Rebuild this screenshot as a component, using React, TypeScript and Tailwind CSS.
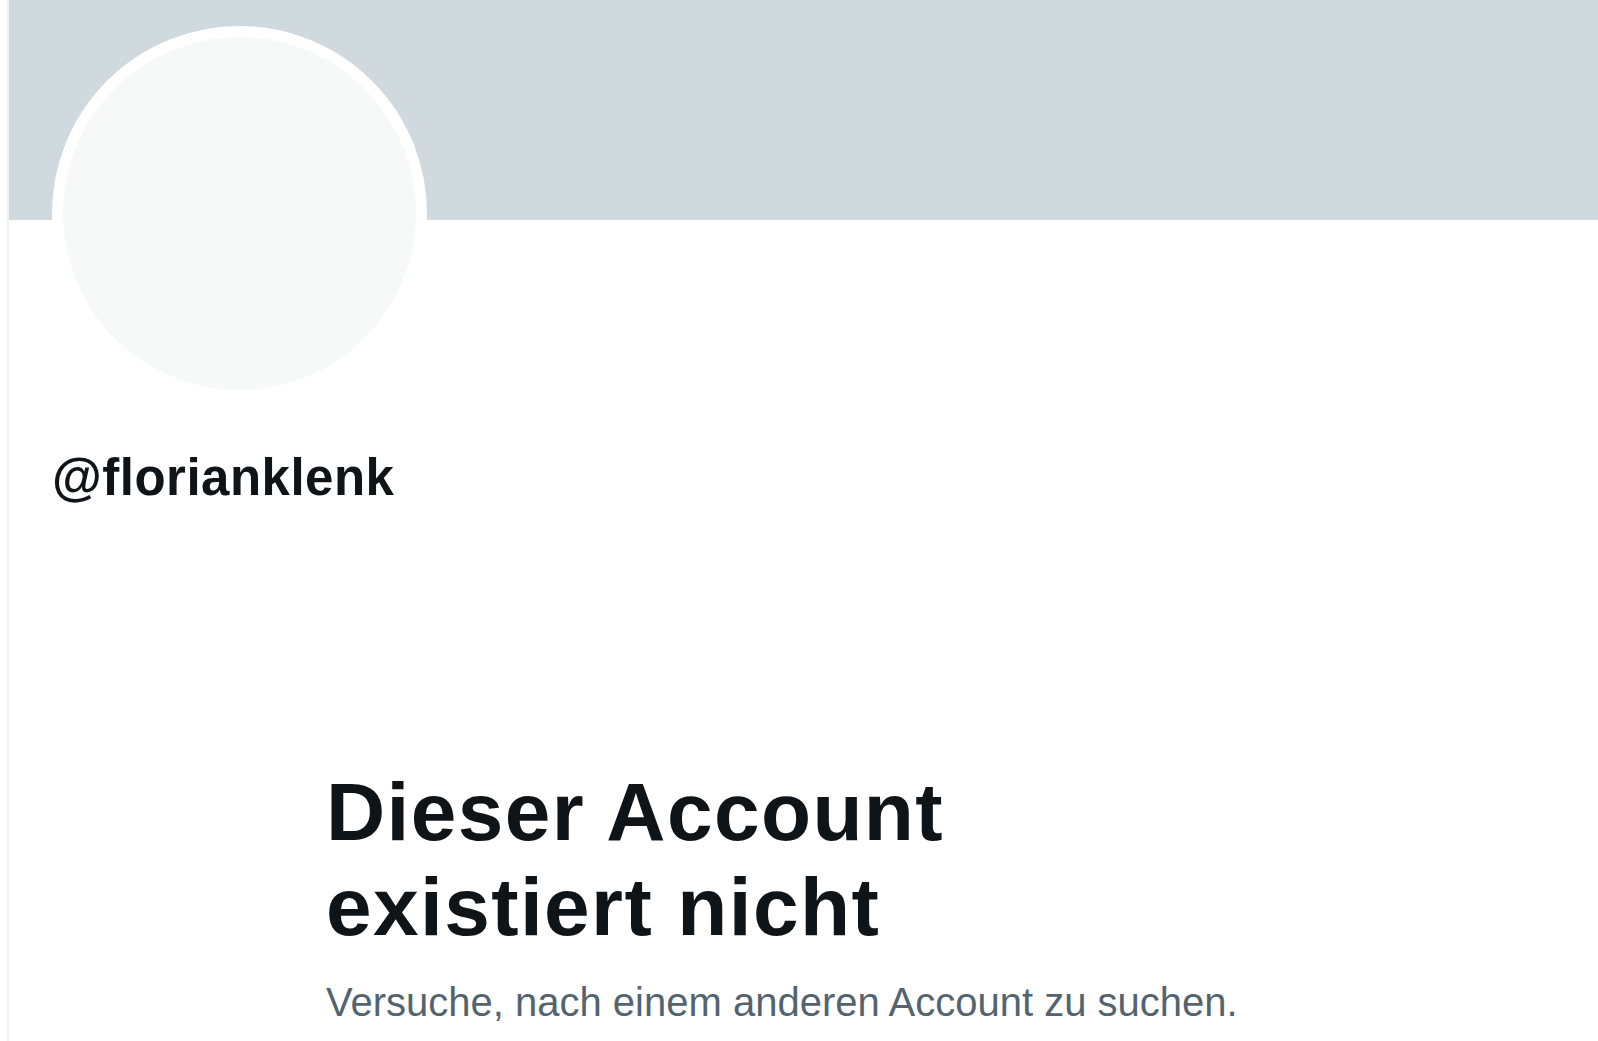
import React from 'react';

const ProfileHeader: React.FC<{ handle: string }> = ({ handle }) => {
  return (
    <div>
      <div className="h-[220px] bg-[#cfd9de]" />
      <div className="px-[43px]">
        <div className="-mt-[194px] w-[375px] h-[375px] rounded-full border-[11px] border-white bg-[#f7f9f9]" />
        <div className="mt-[47px] text-[51px] leading-[60px] font-bold tracking-[0.5px] text-[#0f1419]">@{handle}</div>
      </div>
    </div>
  );
};

const EmptyState: React.FC = () => {
  return (
    <div className="pl-[317px] mt-[256px]">
      <div className="max-w-[920px]">
        <h1 className="text-[82px] leading-[95px] font-bold tracking-[1.4px] text-[#0f1419]">
          Dieser Account existiert nicht
        </h1>
        <p className="mt-[22px] text-[40px] leading-[52px] text-[#536471]">
          Versuche, nach einem anderen Account zu suchen.
        </p>
      </div>
    </div>
  );
};

const App: React.FC = () => {
  return (
    <div
      className="flex min-h-[1041px] bg-white"
      style={{ fontFamily: '"Liberation Sans", Arial, sans-serif' }}
    >
      <div className="w-[7px] shrink-0" />
      <main className="flex-1 border-l-2 border-[#eff3f4]">
        <ProfileHeader handle="florianklenk" />
        <EmptyState />
      </main>
    </div>
  );
};

export default App;
